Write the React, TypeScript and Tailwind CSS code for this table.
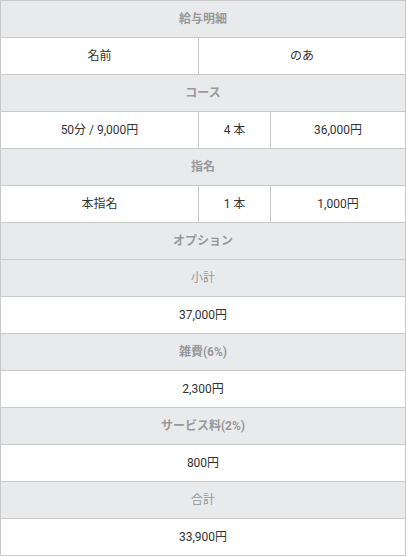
const font = { fontFamily: '"Roboto", "Noto Sans CJK JP", sans-serif' };

const Header = ({ label, bold = true }: { label: string; bold?: boolean }) => (
  <div
    className={`h-[37px] flex items-center justify-center bg-[#e9eaec] border-r border-b border-[#c9c9c9] text-[12px] text-[#999] ${
      bold ? 'font-bold' : 'font-normal'
    }`}
  >
    {label}
  </div>
);

const Cell = ({ children }: { children: React.ReactNode }) => (
  <div className="h-[37px] flex items-center justify-center bg-white border-r border-b border-[#c9c9c9] text-[12px] text-[#333]">
    {children}
  </div>
);

const Row3 = ({ a, b, c }: { a: string; b: string; c: string }) => (
  <div className="grid grid-cols-[198px_72px_1fr]">
    <Cell>{a}</Cell>
    <Cell>{b}</Cell>
    <Cell>{c}</Cell>
  </div>
);

export default function App() {
  return (
    <div className="w-[406px] bg-white" style={font}>
      <div className="border-l border-t border-[#c9c9c9]">
        <Header label="給与明細" />
        <div className="grid grid-cols-[198px_1fr]">
          <Cell>名前</Cell>
          <Cell>のあ</Cell>
        </div>
        <Header label="コース" />
        <Row3 a="50分 / 9,000円" b="4 本" c="36,000円" />
        <Header label="指名" />
        <Row3 a="本指名" b="1 本" c="1,000円" />
        <Header label="オプション" />
        <Header label="小計" bold={false} />
        <Cell>37,000円</Cell>
        <Header label="雑費(6%)" />
        <Cell>2,300円</Cell>
        <Header label="サービス料(2%)" />
        <Cell>800円</Cell>
        <Header label="合計" bold={false} />
        <Cell>33,900円</Cell>
      </div>
    </div>
  );
}
